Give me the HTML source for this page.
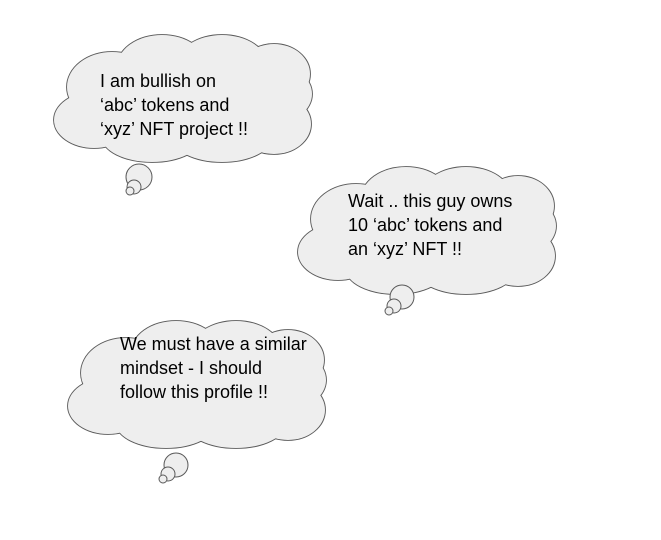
<!DOCTYPE html>
<html><head><meta charset="utf-8"><style>
html,body{margin:0;padding:0;background:#fff;}
svg{display:block}
text{font-family:"Liberation Sans",sans-serif;font-size:18px;fill:#000}
</style></head><body>
<svg width="661" height="540" viewBox="0 0 661 540">
<defs>
<g id="cs">
<ellipse cx="60" cy="55" rx="45" ry="35"/>
<ellipse cx="110" cy="35" rx="45" ry="32"/>
<ellipse cx="170" cy="33" rx="45" ry="30"/>
<ellipse cx="222" cy="42" rx="36" ry="30"/>
<ellipse cx="220" cy="62" rx="40" ry="30"/>
<ellipse cx="222" cy="92" rx="37" ry="30"/>
<ellipse cx="170" cy="105" rx="50" ry="25"/>
<ellipse cx="100" cy="105" rx="50" ry="25"/>
<ellipse cx="42" cy="88" rx="40" ry="28"/>
<ellipse cx="130" cy="70" rx="90" ry="45"/>
</g>
<g id="cloud">
<use href="#cs" fill="none" stroke="#595959" stroke-width="1.8"/>
<use href="#cs" fill="#eeeeee" stroke="none"/>
</g>
</defs>
<g transform="translate(52,32)"><use href="#cloud"/></g>
<g fill="#eeeeee" stroke="#595959" stroke-width="1">
<circle cx="139" cy="177" r="13"/><circle cx="134" cy="187" r="7"/><circle cx="130" cy="191" r="4"/>
</g>
<text x="100" y="87">I am bullish on</text>
<text x="100" y="111">‘abc’ tokens and</text>
<text x="100" y="135">‘xyz’ NFT project !!</text>

<g transform="translate(296,164)"><use href="#cloud"/></g>
<g fill="#eeeeee" stroke="#595959" stroke-width="1">
<circle cx="402" cy="297" r="12"/><circle cx="394" cy="306" r="7"/><circle cx="389" cy="311" r="4"/>
</g>
<text x="348" y="207">Wait .. this guy owns</text>
<text x="348" y="231">10 ‘abc’ tokens and</text>
<text x="348" y="255">an ‘xyz’ NFT !!</text>

<g transform="translate(66,318)"><use href="#cloud"/></g>
<g fill="#eeeeee" stroke="#595959" stroke-width="1">
<circle cx="176" cy="465" r="12"/><circle cx="168" cy="474" r="7"/><circle cx="163" cy="479" r="4"/>
</g>
<text x="120" y="350">We must have a similar</text>
<text x="120" y="374">mindset - I should</text>
<text x="120" y="398">follow this profile !!</text>
</svg>
</body></html>
